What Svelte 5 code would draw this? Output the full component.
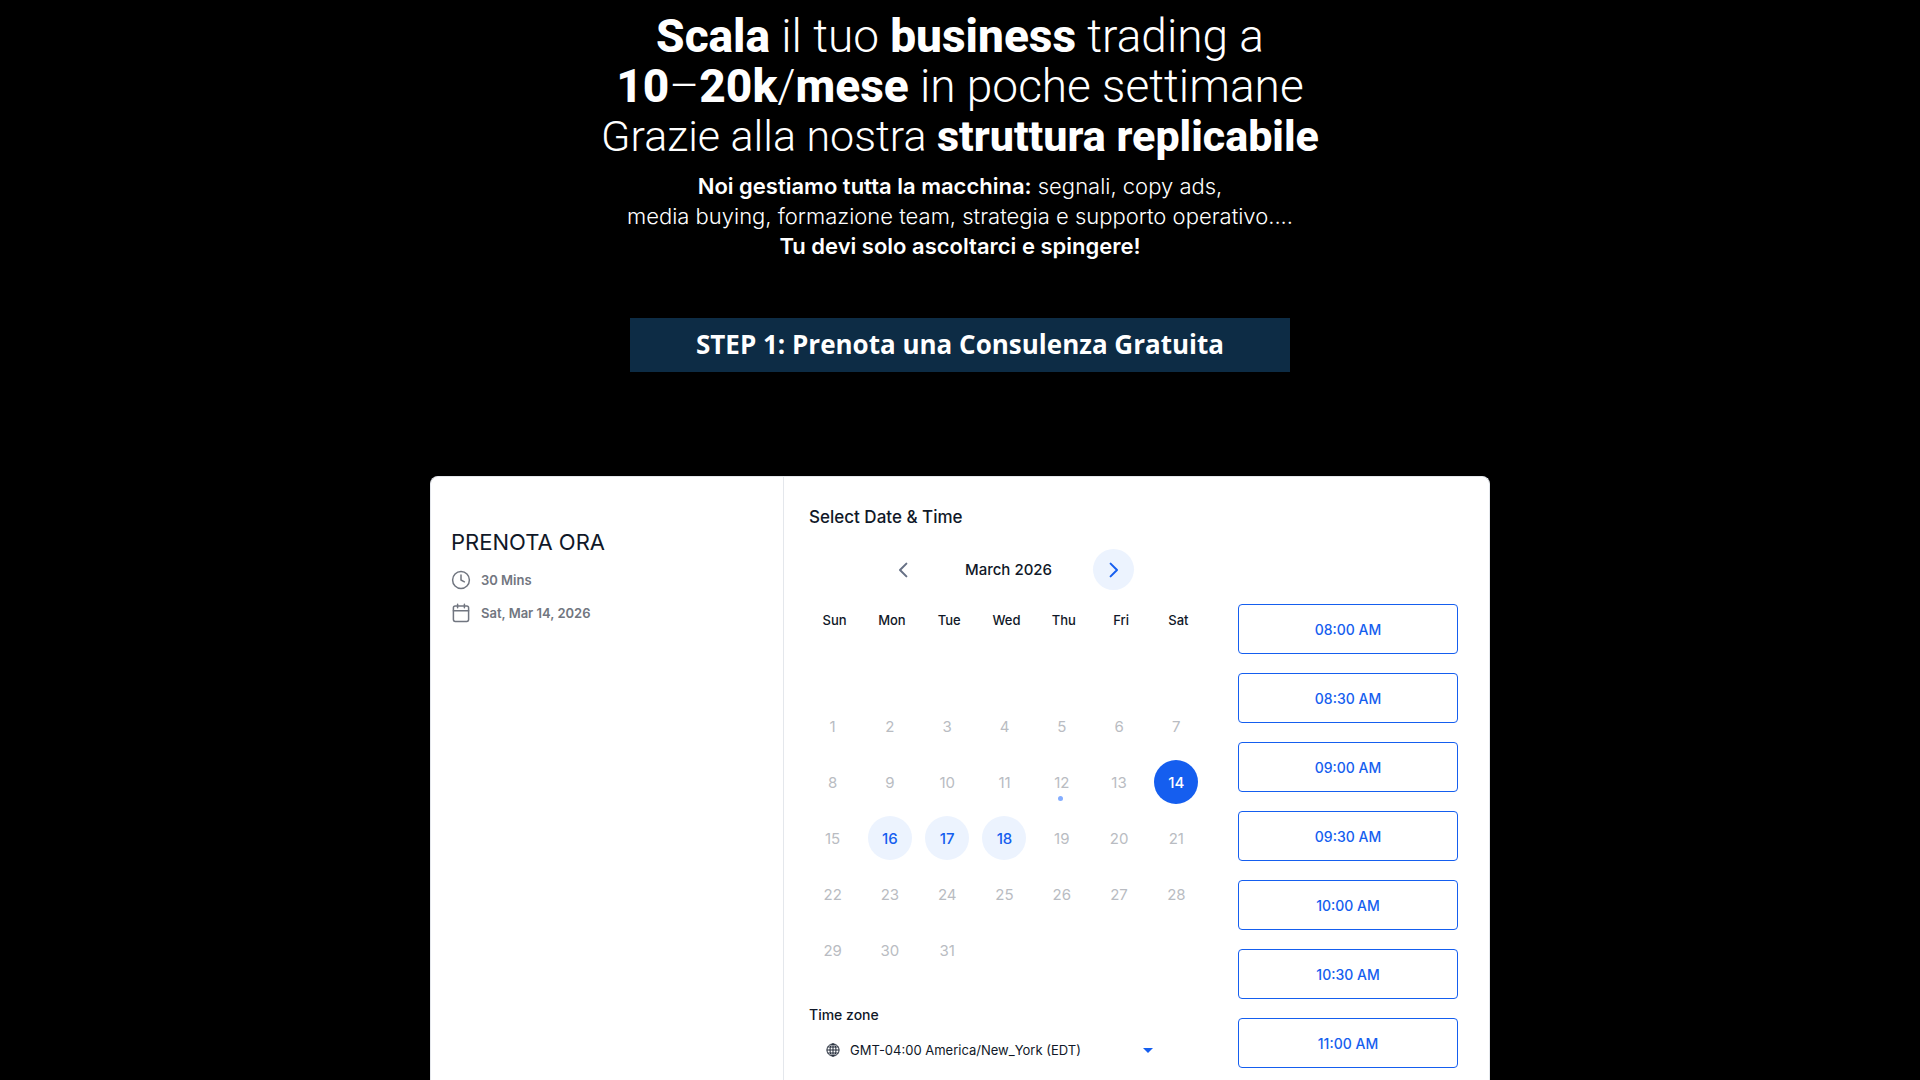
<script lang="ts">
  const weekdays = ["Sun", "Mon", "Tue", "Wed", "Thu", "Fri", "Sat"];
  const slots = ["08:00 AM", "08:30 AM", "09:00 AM", "09:30 AM", "10:00 AM", "10:30 AM", "11:00 AM"];
  const available = [14, 16, 17, 18];
  const today = 12;

  // March 2026 starts on a Sunday
  const weeks = Array.from({ length: 5 }, (_, w) =>
    Array.from({ length: 7 }, (_, d) => w * 7 + d + 1)
  );

  let selected = $state(14);
  let timezone = $state("America/New_York");
</script>

<div class="page">
  <header class="hero">
    <h1>
      <strong>Scala</strong> il tuo <strong>business</strong> trading a<br />
      <strong>10</strong>–<strong>20k</strong>/<strong>mese</strong> in poche settimane
      <span class="third">Grazie alla nostra <strong>struttura replicabile</strong></span>
    </h1>
    <p class="lead">
      <strong>Noi gestiamo tutta la macchina:</strong> segnali, copy ads,<br />
      media buying, formazione team, strategia e supporto operativo....<br />
      <strong>Tu devi solo ascoltarci e spingere!</strong>
    </p>
  </header>

  <h2 class="step">STEP 1: Prenota una Consulenza Gratuita</h2>

  <main class="card">
    <aside class="info">
      <h3>PRENOTA ORA</h3>
      <div class="info-row">
        <svg width="20" height="20" viewBox="0 0 20 20" aria-hidden="true">
          <circle cx="10" cy="10" r="8.4" />
          <path d="M10 5v5l3.4 1.8" />
        </svg>
        <span>30 Mins</span>
      </div>
      <div class="info-row">
        <svg width="20" height="20" viewBox="0 0 20 20" aria-hidden="true">
          <rect x="2.4" y="3" width="15.2" height="15.4" rx="1.8" />
          <path d="M2.4 7.8h15.2M6.6 1.2v3.6M13.4 1.2v3.6" />
        </svg>
        <span>Sat, Mar 14, 2026</span>
      </div>
    </aside>

    <section class="picker">
      <h4>Select Date &amp; Time</h4>
      <div class="columns">
        <div class="calendar">
          <div class="month">
            <button class="nav" aria-label="Previous month">
              <svg width="12" height="16" viewBox="0 0 12 16" aria-hidden="true"><path d="M9.4 1.6 3 8l6.4 6.4" /></svg>
            </button>
            <span class="month-name">March 2026</span>
            <button class="nav nav--next" aria-label="Next month">
              <svg width="12" height="16" viewBox="0 0 12 16" aria-hidden="true"><path d="M2.6 1.6 9 8l-6.4 6.4" /></svg>
            </button>
          </div>

          <table>
            <thead>
              <tr>
                {#each weekdays as name}
                  <th scope="col">{name}</th>
                {/each}
              </tr>
            </thead>
            <tbody>
              <tr class="spacer"><td colspan="7"></td></tr>
              {#each weeks as week}
                <tr>
                  {#each week as day}
                    <td>
                      {#if day <= 31}
                        <button
                          class="day"
                          class:available={available.includes(day)}
                          class:selected={day === selected}
                          class:today={day === today}
                          disabled={!available.includes(day)}
                          onclick={() => (selected = day)}
                        >{day}</button>
                      {/if}
                    </td>
                  {/each}
                </tr>
              {/each}
            </tbody>
          </table>

          <label class="tz-label" for="timezone">Time zone</label>
          <div class="tz">
            <svg class="globe" width="14" height="14" viewBox="0 0 14 14" aria-hidden="true">
              <circle cx="7" cy="7" r="6.1" />
              <ellipse cx="7" cy="7" rx="3" ry="6.1" />
              <path d="M7 .9v12.2M.9 7h12.2M1.7 4h10.6M1.7 10h10.6" />
            </svg>
            <select id="timezone" bind:value={timezone}>
              <option value="America/New_York">GMT-04:00 America/New_York (EDT)</option>
            </select>
            <svg class="caret" width="10" height="5" viewBox="0 0 10 5" aria-hidden="true"><path d="M0 0h10L5 5z" /></svg>
          </div>
        </div>

        <div class="slots">
          {#each slots as slot}
            <button class="slot">{slot}</button>
          {/each}
        </div>
      </div>
    </section>
  </main>
</div>

<style>
  :global(body) {
    background: #000;
  }

  .page {
    display: flex;
    flex-direction: column;
    align-items: center;
    min-height: 100vh;
    font-family: Inter, "Liberation Sans", sans-serif;
    color: #101828;
  }

  h1,
  h2,
  h3,
  h4,
  p {
    margin: 0;
  }

  button {
    padding: 0;
    border: 0;
    background: none;
    font-family: inherit;
    cursor: pointer;
  }

  .hero {
    padding-top: 11px;
    text-align: center;
    color: #fff;
  }

  h1 {
    font-family: Roboto, "Liberation Sans", sans-serif;
    font-size: 46px;
    font-weight: 300;
    line-height: 50px;
  }

  h1 strong {
    font-weight: 800;
  }

  .third {
    display: block;
    font-size: 43px;
  }

  .lead {
    margin-top: 10px;
    font-size: 22px;
    font-weight: 300;
    line-height: 30px;
  }

  .lead strong {
    font-weight: 600;
  }

  .step {
    box-sizing: border-box;
    width: 100%;
    max-width: 660px;
    margin-top: 57px;
    padding: 8px 16px 10px;
    background: #0d2c45;
    color: #fff;
    font-family: "Open Sans", sans-serif;
    font-size: 26px;
    font-weight: 700;
    line-height: 36px;
    text-align: center;
  }

  .card {
    box-sizing: border-box;
    display: flex;
    flex: 1;
    width: 100%;
    max-width: 1060px;
    margin-top: 104px;
    border: 1px solid #e4e7ec;
    border-bottom: 0;
    border-radius: 8px 8px 0 0;
    background: #fff;
  }

  .info {
    box-sizing: border-box;
    flex: 0 0 353px;
    padding: 49px 20px;
    border-right: 1px solid #e4e7ec;
  }

  .info h3 {
    margin-bottom: 10px;
    font-size: 22px;
    font-weight: 400;
    line-height: 32px;
  }

  .info-row {
    display: flex;
    align-items: center;
    gap: 10px;
    margin-bottom: 9px;
    color: #717680;
    font-size: 13px;
    font-weight: 600;
    line-height: 24px;
  }

  .info-row svg {
    fill: none;
    stroke: #717680;
    stroke-width: 1.5;
    stroke-linecap: round;
    stroke-linejoin: round;
  }

  .picker {
    flex: 1;
    padding: 28px 31px 10px 20px;
  }

  .picker h4 {
    margin-left: 5px;
    font-size: 17px;
    font-weight: 500;
    line-height: 24px;
  }

  .columns {
    display: flex;
    justify-content: space-between;
  }

  .calendar {
    flex: 0 0 401px;
  }

  .month {
    display: flex;
    align-items: center;
    justify-content: center;
    gap: 41px;
    padding: 20px 0 19px 8px;
  }

  .month-name {
    font-size: 15px;
    font-weight: 500;
    line-height: 24px;
  }

  .nav {
    display: flex;
    align-items: center;
    justify-content: center;
    width: 41px;
    height: 41px;
    border-radius: 50%;
  }

  .nav svg {
    fill: none;
    stroke: #667085;
    stroke-width: 2;
    stroke-linecap: round;
    stroke-linejoin: round;
  }

  .nav--next {
    background: #ecf3fe;
  }

  .nav--next svg {
    stroke: #155eef;
  }

  table {
    width: 100%;
    border-collapse: collapse;
    table-layout: fixed;
  }

  th {
    height: 22px;
    padding: 0 0 11px 4px;
    font-size: 13px;
    font-weight: 500;
    line-height: 22px;
  }

  td {
    height: 56px;
    padding: 0;
    text-align: center;
  }

  .day {
    position: relative;
    width: 44px;
    height: 44px;
    border-radius: 50%;
    color: #b9bcc2;
    font-size: 15px;
    font-weight: 400;
    vertical-align: middle;
  }

  .day:disabled {
    cursor: default;
  }

  .day.available {
    background: #ecf3fe;
    color: #155eef;
    font-weight: 500;
  }

  .day.selected {
    background: #155eef;
    color: #fff;
  }

  .day.today::after {
    content: "";
    position: absolute;
    bottom: 3px;
    left: 18px;
    width: 5px;
    height: 5px;
    border-radius: 50%;
    background: #84adff;
  }

  .tz-label {
    display: block;
    margin: 25px 0 0 5px;
    font-size: 14px;
    font-weight: 500;
    line-height: 24px;
  }

  .tz {
    position: relative;
    width: 350px;
    margin: 6px 0 0 5px;
  }

  .tz select {
    width: 100%;
    height: 34px;
    padding: 0 40px 0 41px;
    border: 0;
    appearance: none;
    background: transparent;
    color: #101828;
    font-family: inherit;
    font-size: 13px;
  }

  .globe {
    position: absolute;
    top: 10px;
    left: 17px;
    fill: none;
    stroke: #101828;
    stroke-width: 0.9;
  }

  .caret {
    position: absolute;
    top: 15px;
    right: 6px;
    fill: #155eef;
    pointer-events: none;
  }

  .slots {
    display: flex;
    flex: 0 0 220px;
    flex-direction: column;
    gap: 19px;
    padding-top: 75px;
  }

  .slot {
    box-sizing: border-box;
    height: 50px;
    border: 1px solid #155eef;
    border-radius: 4px;
    color: #155eef;
    font-size: 14px;
    font-weight: 500;
  }
</style>
